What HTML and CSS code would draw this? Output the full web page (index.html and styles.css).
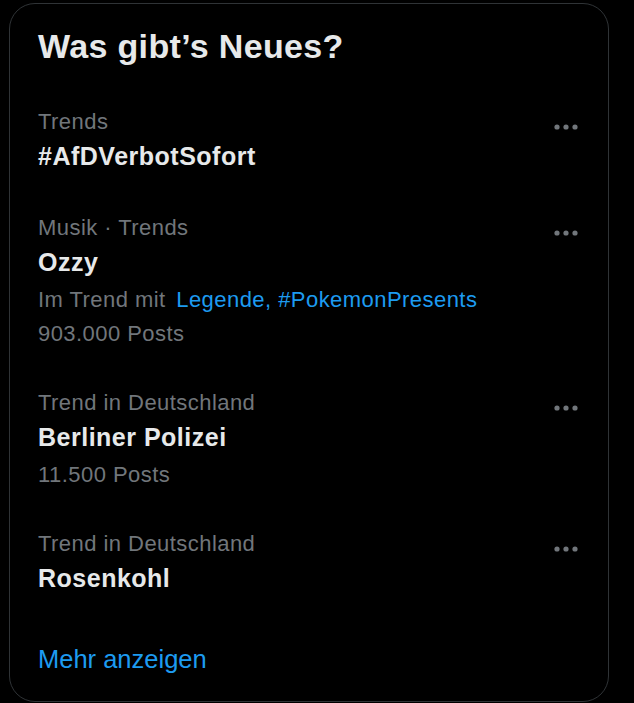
FILE: index.html
```html
<!DOCTYPE html>
<html lang="de">
<head>
<meta charset="utf-8">
<title>Was gibt’s Neues?</title>
<link rel="stylesheet" href="styles.css">
</head>
<body>
<section class="card">
  <h2 class="title">Was gibt’s Neues?</h2>

  <div class="trend">
    <div class="trend-body">
      <div class="cat">Trends</div>
      <div class="name">#AfDVerbotSofort</div>
    </div>
    <svg class="more" width="26" height="10" viewBox="0 0 26 10"><circle cx="4" cy="5" r="2.6"/><circle cx="13" cy="5" r="2.6"/><circle cx="22" cy="5" r="2.6"/></svg>
  </div>

  <div class="trend">
    <div class="trend-body">
      <div class="cat">Musik · Trends</div>
      <div class="name">Ozzy</div>
      <div class="meta with">Im Trend mit <span class="links">Legende, #PokemonPresents</span></div>
      <div class="meta count">903.000 Posts</div>
    </div>
    <svg class="more" width="26" height="10" viewBox="0 0 26 10"><circle cx="4" cy="5" r="2.6"/><circle cx="13" cy="5" r="2.6"/><circle cx="22" cy="5" r="2.6"/></svg>
  </div>

  <div class="trend">
    <div class="trend-body">
      <div class="cat">Trend in Deutschland</div>
      <div class="name">Berliner Polizei</div>
      <div class="meta">11.500 Posts</div>
    </div>
    <svg class="more" width="26" height="10" viewBox="0 0 26 10"><circle cx="4" cy="5" r="2.6"/><circle cx="13" cy="5" r="2.6"/><circle cx="22" cy="5" r="2.6"/></svg>
  </div>

  <div class="trend">
    <div class="trend-body">
      <div class="cat">Trend in Deutschland</div>
      <div class="name">Rosenkohl</div>
    </div>
    <svg class="more" width="26" height="10" viewBox="0 0 26 10"><circle cx="4" cy="5" r="2.6"/><circle cx="13" cy="5" r="2.6"/><circle cx="22" cy="5" r="2.6"/></svg>
  </div>

  <a class="show-more" href="#">Mehr anzeigen</a>
</section>
</body>
</html>
```

FILE: styles.css
```css
html, body {
  background: #000;
}
body {
  margin: 0;
  padding: 3px 0 0 9px;
  font-family: "Liberation Sans", Arial, sans-serif;
  color: #e7e9ea;
}
.card {
  width: 598px;
  border: 1px solid #2f3336;
  border-radius: 26px;
  box-sizing: content-box;
}
.title {
  margin: 0;
  padding: 22px 28px 21px;
  font-size: 34px;
  line-height: 40px;
  font-weight: 700;
  letter-spacing: 0.35px;
  color: #e7e9ea;
}
.trend {
  display: flex;
  justify-content: space-between;
  align-items: flex-start;
  padding: 20px 28px 19px;
}
.cat {
  font-size: 22px;
  line-height: 30px;
  letter-spacing: 0.45px;
  color: #71767b;
}
.name {
  margin-top: 1px;
  font-size: 25px;
  line-height: 36px;
  font-weight: 700;
  letter-spacing: 0.5px;
  color: #e7e9ea;
}
.meta {
  margin-top: 5px;
  font-size: 22px;
  line-height: 30px;
  letter-spacing: 0.45px;
  color: #71767b;
}
.meta.count {
  margin-top: 4px;
}
.links {
  margin-left: 4px;
  color: #1d9bf0;
}
.more {
  display: block;
  margin-top: 15px;
  margin-right: 1px;
  fill: #71767b;
}
.show-more {
  display: block;
  padding: 27px 28px 25px;
  font-size: 25.5px;
  line-height: 34px;
  color: #1d9bf0;
  text-decoration: none;
}
```
